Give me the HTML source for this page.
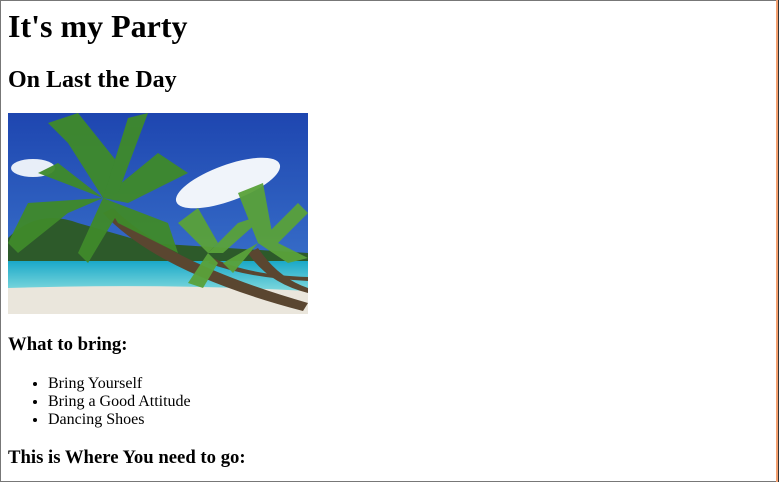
<!DOCTYPE html>
<html><head><style>
html,body{margin:0;padding:0;width:779px;height:482px;overflow:hidden;background:#fff;}
.frame{position:absolute;left:0;top:0;width:776px;height:480px;border:1px solid #777;border-right:none;}
.or{position:absolute;left:776px;top:0;width:2px;height:482px;background:#f4a070;}
.dk{position:absolute;left:778px;top:0;width:1px;height:482px;background:#333;}
.t{position:absolute;left:8px;margin:0;font-family:"Liberation Serif",serif;color:#000;white-space:nowrap;font-weight:bold;}
ul{position:absolute;left:8px;top:375px;margin:0;padding-left:40px;font-family:"Liberation Serif",serif;font-size:16px;line-height:18px;}
</style></head><body>
<div class="frame"></div><div class="or"></div><div class="dk"></div>
<div class="t" style="top:8px;font-size:32px;">It's my Party</div>
<div class="t" style="top:67px;font-size:24px;">On Last the Day</div>
<svg style="position:absolute;left:8px;top:113px" width="300" height="201" viewBox="0 0 300 201">
<defs>
<linearGradient id="sky" x1="0" y1="0" x2="0" y2="1"><stop offset="0" stop-color="#1e46b0"/><stop offset="1" stop-color="#3f7ad0"/></linearGradient>
<linearGradient id="sea" x1="0" y1="0" x2="0" y2="1"><stop offset="0" stop-color="#1aa8c8"/><stop offset="1" stop-color="#8fe0e0"/></linearGradient>
</defs>
<rect width="300" height="201" fill="url(#sky)"/>
<ellipse cx="220" cy="70" rx="55" ry="18" fill="#f0f4fa" transform="rotate(-20 220 70)"/>
<ellipse cx="25" cy="55" rx="22" ry="9" fill="#e8eef8"/>
<ellipse cx="30" cy="120" rx="20" ry="6" fill="#dfe8f5"/>
<path d="M0 125 Q30 95 70 110 L140 130 L300 140 L300 150 L0 150Z" fill="#2d5a2a"/>
<rect y="148" width="300" height="35" fill="url(#sea)"/>
<path d="M0 175 Q150 170 300 178 L300 201 L0 201Z" fill="#eae6dc"/>
<path d="M95 100 Q150 160 295 198 L300 190 Q160 150 105 95Z" fill="#5a4630"/>
<path d="M240 140 Q260 170 300 180 L300 175 Q270 165 250 135Z" fill="#5a4630"/>
<path d="M200 150 Q240 165 300 168 L300 164 Q240 162 205 145Z" fill="#5a4630"/>
<g fill="#3f8a2a" opacity="0.95">
<path d="M95 85 L20 90 L0 130 L10 140 L60 100Z"/>
<path d="M95 85 L60 30 L40 10 L70 0 L110 50Z"/>
<path d="M95 85 L150 40 L180 60 L120 90Z"/>
<path d="M95 85 L160 110 L170 140 L110 110Z"/>
<path d="M95 85 L70 140 L80 150 L110 100Z"/>
<path d="M95 85 L120 5 L140 0 L110 80Z"/>
<path d="M95 85 L30 60 L50 50Z"/>
</g>
<g fill="#5aa23a" opacity="0.95">
<path d="M200 140 L170 110 L190 95 L210 130Z"/>
<path d="M200 140 L230 110 L260 100 L215 140Z"/>
<path d="M200 140 L180 170 L195 175 L210 150Z"/>
<path d="M250 130 L230 80 L255 70 L265 125Z"/>
<path d="M250 130 L290 90 L300 100 L265 135Z"/>
<path d="M250 130 L280 150 L300 145 L260 125Z"/>
<path d="M250 130 L215 150 L225 160Z"/>
</g>
</svg>
<div class="t" style="top:334px;font-size:18.72px;">What to bring:</div>
<ul><li>Bring Yourself</li><li>Bring a Good Attitude</li><li>Dancing Shoes</li></ul>
<div class="t" style="top:447px;font-size:18.72px;">This is Where You need to go:</div>
</body></html>
